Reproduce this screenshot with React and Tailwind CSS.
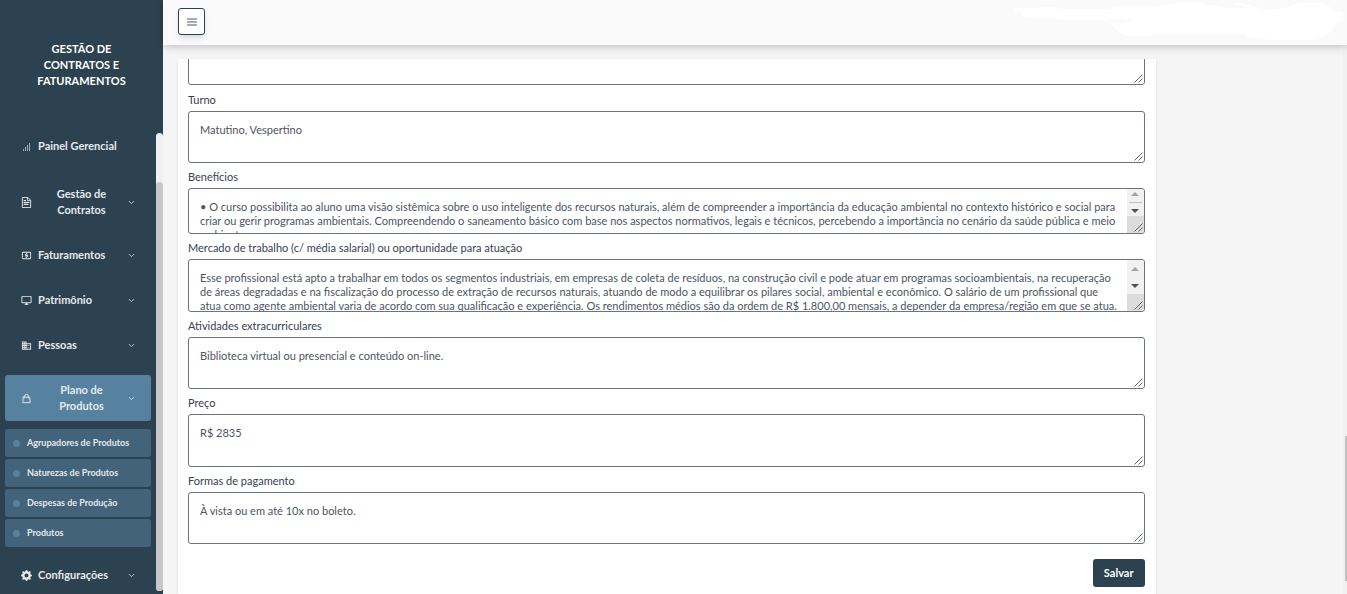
import React from "react";
import {
  MdOutlineDesktopWindows,
  MdBusiness,
  MdLocalAtm,
} from "react-icons/md";
import { FiChevronDown, FiMenu } from "react-icons/fi";
import { BsGearFill } from "react-icons/bs";
import { GrDocumentText } from "react-icons/gr";
import { HiOutlineShoppingBag } from "react-icons/hi";

const BarsIcon = ({ className }) => (
  <svg viewBox="0 0 11 11" className={className} fill="currentColor">
    <rect x="2" y="8" width="1" height="2" />
    <rect x="4" y="6" width="1" height="4" />
    <rect x="6" y="4" width="1" height="6" />
    <rect x="8" y="2" width="1" height="8" />
  </svg>
);

const menu = [
  { label: "Gestão de Contratos", icon: GrDocumentText },
  { label: "Faturamentos", icon: MdLocalAtm },
  { label: "Patrimônio", icon: MdOutlineDesktopWindows },
  { label: "Pessoas", icon: MdBusiness },
  { label: "Plano de Produtos", icon: HiOutlineShoppingBag, active: true },
];

const submenu = [
  "Agrupadores de Produtos",
  "Naturezas de Produtos",
  "Despesas de Produção",
  "Produtos",
];

const fields = [
  { id: "turno", label: "Turno", value: "Matutino, Vespertino" },
  {
    id: "beneficios",
    label: "Benefícios",
    height: "h-[46px]",
    scroll: true,
    thumb: true,
    value:
      "• O curso possibilita ao aluno uma visão sistêmica sobre o uso inteligente dos recursos naturais, além de compreender a importância da educação ambiental no contexto histórico e social para criar ou gerir programas ambientais. Compreendendo o saneamento básico com base nos aspectos normativos, legais e técnicos, percebendo a importância no cenário da saúde pública e meio ambiente.",
  },
  {
    id: "mercado",
    label: "Mercado de trabalho (c/ média salarial) ou oportunidade para atuação",
    height: "h-[53px]",
    scroll: true,
    value:
      "Esse profissional está apto a trabalhar em todos os segmentos industriais, em empresas de coleta de resíduos, na construção civil e pode atuar em programas socioambientais, na recuperação de áreas degradadas e na fiscalização do processo de extração de recursos naturais, atuando de modo a equilibrar os pilares social, ambiental e econômico. O salário de um profissional que atua como agente ambiental varia de acordo com sua qualificação e experiência. Os rendimentos médios são da ordem de R$ 1.800,00 mensais, a depender da empresa/região em que se atua.",
  },
  {
    id: "atividades",
    label: "Atividades extracurriculares",
    value: "Biblioteca virtual ou presencial e conteúdo on-line.",
  },
  { id: "preco", label: "Preço", height: "h-[53px]", value: "R$ 2835" },
  {
    id: "pagamento",
    label: "Formas de pagamento",
    value: "À vista ou em até 10x no boleto.",
  },
];

const MenuButton = ({ label, icon: Icon, active }) => (
  <button
    className={`flex w-full items-center gap-[6px] rounded-[3px] pr-[15px] pl-4 py-[7px] text-[11px] leading-4 font-bold text-[#e4e9ec] cursor-pointer ${
      active ? "bg-[#5682a0]" : ""
    }`}
  >
    <Icon className="h-[11px] w-[11px] shrink-0" />
    <span
      className={`flex-1 ${label.length > 15 ? "pr-2 pl-3 text-center" : "text-left"}`}
    >
      {label}
    </span>
    <FiChevronDown className="h-[9px] w-[9px] shrink-0" />
  </button>
);

const Sidebar = () => (
  <aside className="flex w-[163px] shrink-0 flex-col bg-[#2d4250]">
    <div className="flex h-[133px] shrink-0 items-center justify-center px-8 pb-[3px]">
      <h1 className="text-center text-[11px] leading-4 font-bold text-white">
        GESTÃO DE CONTRATOS E FATURAMENTOS
      </h1>
    </div>
    <div className="flex min-h-0 flex-1">
      <nav className="min-w-0 flex-1 overflow-hidden px-[5px]">
        <a
          href="#painel"
          className="mb-5 flex items-center gap-[6px] px-4 py-[5px] text-[11px] leading-4 font-bold text-[#e4e9ec]"
        >
          <BarsIcon className="h-[11px] w-[11px] text-[#a3aeb6]" />
          Painel Gerencial
        </a>
        <ul className="grid gap-[15px]">
          {menu.map((item) => (
            <li key={item.label}>
              <MenuButton {...item} />
            </li>
          ))}
        </ul>
        <ul className="mt-2 mb-[13px] grid gap-[2px]">
          {submenu.map((label) => (
            <li key={label}>
              <a
                href="#produtos"
                className="flex h-7 items-center gap-[7px] rounded-[3px] bg-[#43637a] px-2 text-[9px] font-bold text-[#e4e9ec]"
              >
                <span className="h-[7px] w-[7px] rounded-full bg-[#5682a0]" />
                {label}
              </a>
            </li>
          ))}
        </ul>
        <MenuButton label="Configurações" icon={BsGearFill} />
      </nav>
      <div className="mb-[3px] w-[7px] rounded-full bg-[#f1f1f1] pt-[49px]">
        <div className="h-full rounded-full bg-[#c8c6c6]" />
      </div>
    </div>
  </aside>
);

const ScrollTrack = ({ thumb }) => (
  <div className="pointer-events-none absolute top-px right-px bottom-px flex w-[17px] flex-col overflow-hidden rounded-r-[3px] bg-[#f1f1f1]">
    <div className="flex flex-1 flex-col items-center justify-around">
      <svg viewBox="0 0 8 4" className="h-1 w-2 fill-[#a3a3a3]">
        <path d="M0 4L4 0L8 4Z" />
      </svg>
      {thumb && <div className="h-px w-[13px] bg-[#c1c1c1]" />}
      <svg viewBox="0 0 8 4" className="h-1 w-2 fill-[#505050]">
        <path d="M0 0L4 4L8 0Z" />
      </svg>
    </div>
    <div className="h-[17px] bg-[#dcdcdc]" />
  </div>
);

const ResizeGrip = () => (
  <svg
    viewBox="0 0 9 9"
    className="pointer-events-none absolute right-[2px] bottom-[2px] h-[9px] w-[9px]"
    stroke="#666666"
    strokeWidth="1"
  >
    <path d="M0.5 8.5L8.5 0.5M4.5 8.5L8.5 4.5" />
  </svg>
);

const TextBox = ({ id, value, label, height = "h-[52px]", scroll, thumb }) => (
  <div className="relative shrink-0">
    <textarea
      id={id}
      aria-label={label}
      defaultValue={value}
      className={`block w-full resize-none overflow-hidden rounded-[3px] border border-[#6b7280] bg-white pt-[11px] pl-[11px] text-[11px] leading-[14px] text-[#4b5563] ${height} ${
        scroll ? "pr-6" : "pr-[11px]"
      }`}
    />
    {scroll && <ScrollTrack thumb={thumb} />}
    <ResizeGrip />
  </div>
);

const Header = () => (
  <header className="z-10 flex h-[45px] shrink-0 items-start justify-between bg-[#fafafa] pt-2 pl-[15px] shadow-[0_1px_8px_rgba(0,0,0,0.25)]">
    <button
      aria-label="Menu"
      className="flex h-[27px] w-[27px] cursor-pointer items-center justify-center rounded-[3px] border border-[#2d4250] bg-white text-[#4b5563] shadow-md"
    >
      <FiMenu className="h-3 w-3" />
    </button>
    <svg viewBox="0 0 332 40" className="-mt-2 h-10 w-[332px] fill-white">
      <path d="M0 8H24L28 7H40L44 9H95L98 6H140L148 5L160 4L162 2H186L190 5H198L212 8H236L218 3H228L250 10L270 8L280 4L290 3H308L316 8L318 12H330L326 16L328 20L320 24L318 30L306 38L300 40H258L246 38L230 36L232 34H138L136 36H112L104 32L98 27L96 23H108L120 20L92 18V20H48L38 18H10L6 13L0 11Z" />
    </svg>
  </header>
);

const App = () => {
  return (
    <div className="flex h-screen w-full overflow-hidden bg-[#f5f5f5] font-[Lato,sans-serif]">
      <Sidebar />
      <div className="flex min-w-0 flex-1 flex-col">
        <Header />
        <div className="flex min-h-0 flex-1">
          <main className="min-w-0 flex-1 overflow-hidden px-[15px] pt-[14px]">
            <form
              className="min-h-full w-[85%] bg-white pr-[11px] pl-[10px] shadow-sm"
              onSubmit={(e) => e.preventDefault()}
            >
              <div className="flex h-[26px] flex-col justify-end overflow-hidden">
                <TextBox id="modalidade" label="Modalidade" value="" />
              </div>
              <div className="pt-px">
                {fields.map((field) => (
                  <div key={field.id}>
                    <label
                      htmlFor={field.id}
                      className="block h-[25px] pt-[6px] text-[11px] leading-4 text-[#374151]"
                    >
                      {field.label}
                    </label>
                    <TextBox {...field} />
                  </div>
                ))}
              </div>
              <div className="flex justify-end pt-[15px]">
                <button className="h-7 cursor-pointer rounded-[3px] bg-[#2d4250] px-[11px] text-[11px] font-bold text-white">
                  Salvar
                </button>
              </div>
            </form>
          </main>
          <div className="flex w-1 shrink-0 flex-col items-end bg-[#f1f1f1] pb-[13px]">
            <div className="mt-auto h-[27%] w-[2px] bg-[#c1c1c1]" />
          </div>
        </div>
      </div>
    </div>
  );
};

export default App;
